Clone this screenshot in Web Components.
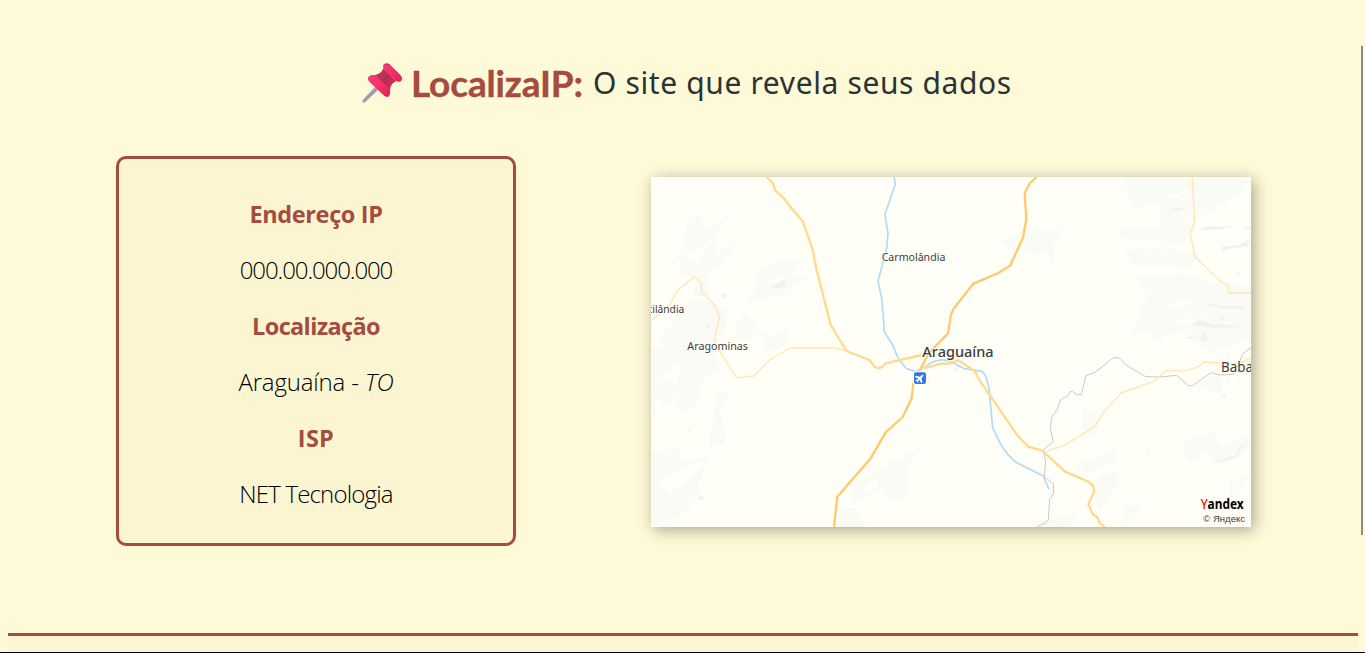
<!DOCTYPE html>
<html lang="pt-BR">
<head>
<meta charset="utf-8">
<title>LocalizaIP</title>
<style>
html,body{margin:0;height:100%;overflow:hidden;background:#fefad8}
</style>
</head>
<body>
<localiza-app></localiza-app>
<script>
const define = (name, html) => customElements.define(name, class extends HTMLElement {
  constructor(){ super(); this.attachShadow({mode:'open'}).innerHTML = html; }
});

define('push-pin', `<style>:host{display:block;width:40px;height:40px}svg{display:block}</style>
<svg width="40" height="40" viewBox="36 38 120 120">
<defs>
<linearGradient id="n" x1="0" y1="0" x2="1" y2="1"><stop offset=".3" stop-color="#bdb6c4"/><stop offset=".7" stop-color="#8c8296"/></linearGradient>
<linearGradient id="b" x1="0" y1="0" x2="1" y2="1"><stop offset="0" stop-color="#c9405f"/><stop offset=".5" stop-color="#b52d55"/><stop offset="1" stop-color="#e0305e"/></linearGradient>
<linearGradient id="c" x1="0" y1="0" x2="1" y2="1"><stop offset="0" stop-color="#f0407a"/><stop offset=".5" stop-color="#fa2e63"/><stop offset="1" stop-color="#d3245f"/></linearGradient>
</defs>
<path d="M75 109 L84 118 L45 156 Q40 159 37 154 Q36 151 40 147Z" fill="url(#n)"/>
<path d="M100 54 L139 93 Q126 97 121 112 L119 126 L66 76 L78 73 Q94 70 100 54Z" fill="url(#b)"/>
<path d="M57 78 Q68 70 80 78 L116 114 Q124 126 118 136 Q112 144 101 135 L58 94 Q50 86 57 78Z" fill="url(#c)"/>
<path d="M101 42 Q109 35 119 42 L151 74 Q160 84 153 92 Q146 98 136 90 L104 60 Q96 50 101 42Z" fill="url(#c)"/>
<path d="M105 43 Q110 38 118 44 L148 74" fill="none" stroke="#cf2d68" stroke-width="3" opacity=".6"/>
</svg>`);

define('site-header', `<style>
:host{display:flex;justify-content:flex-start;align-items:center;height:46px;padding:60px 0 50px 362px}
push-pin{margin:-1px 9px 0 0}
h1{margin:0;font:700 37px/46px Lato,sans-serif;color:#a64b40;white-space:nowrap;width:182px}
h1 span{letter-spacing:-.15px;-webkit-text-stroke:.4px #a64b40}
p{margin:0;font:400 30px/46px "Noto Sans",sans-serif;color:#2c3333;white-space:nowrap;letter-spacing:.62px}
</style><push-pin></push-pin><h1><span>LocalizaIP:</span></h1><p>O site que revela seus dados</p>`);

define('ip-card', `<style>
:host{display:block;box-sizing:border-box;width:400px;height:390px;border:3px solid #a64b40;border-radius:10px;background:#fbf6d1;padding-top:27px}
dl{margin:0;text-align:center;font:300 24px/56px "Open Sans","Noto Sans",sans-serif}
</style><dl><slot></slot></dl>`);

define('ip-field', `<style>
:host{display:block}
dt{font-weight:700;color:#a64b40;font-size:23.5px;letter-spacing:var(--ls-label,-.3px)}
dd{margin:0;color:#000;letter-spacing:var(--ls-value,-.4px)}
</style><dt><slot name="label"></slot></dt><dd><slot></slot></dd>`);

define('city-map', `<style>
:host{display:block;width:600px;height:350px;background:#fffff7;box-shadow:3px 3px 15px rgba(0,0,0,.35)}
svg{display:block;overflow:hidden}
text{font-family:"Noto Sans","Open Sans",sans-serif;fill:#3c3c3e}
.halo{stroke:#fffff7;stroke-width:5;paint-order:stroke}
</style>
<svg width="600" height="350" viewBox="33 36 1800 1050">
<g fill="#fbfbf5">
<path d="M145 154H190V180L205 190L265 154L220 225L232 265L285 235L250 300L200 320L210 400L160 390L170 340L115 325L135 280L90 302L135 250V200Z"/>
<path d="M310 420L350 370L345 330L430 280L490 282L450 340L515 335L455 365V392L380 395Z"/>
<path d="M120 420L200 400L260 440L258 500L200 580L160 620L140 560L95 610L60 520L110 460Z"/>
<path d="M280 480L320 445L360 500L300 530ZM355 495L390 515L450 482L430 545L380 560Z"/>
<path d="M33 545L130 560L215 550L240 610L190 640L170 720L130 740L100 700L33 760ZM230 690L272 665L240 740L260 820L205 850L220 750Z"/>
<path d="M33 860L110 845L130 890L220 870L170 950L180 1000L110 1060L33 1086Z"/>
<path d="M640 960L740 900L850 845L800 900L805 990L740 1010L730 970L680 1000L640 1020ZM600 1030L650 1025L680 1086H590Z"/>
<path d="M1080 230L1160 193L1265 197L1245 235V295L1230 295L1225 260L1180 270L1110 255Z"/>
<path d="M1453 36H1825L1810 75L1700 150L1650 210L1620 240L1560 225L1438 220L1440 193H1560L1558 120L1475 128Z"/>
<path d="M1455 255L1590 245L1680 270L1640 310L1560 300L1480 305ZM1490 335L1620 325L1700 350L1833 365V520L1710 560L1620 500L1560 520L1540 540L1530 500L1470 508L1520 400Z"/>
<path d="M1327 724L1375 758L1365 820L1325 790ZM1305 905L1430 845L1420 890L1340 925ZM1370 940L1430 915L1440 950L1400 1000L1375 1050Z"/>
<path d="M1620 840L1720 795L1740 845L1820 805L1833 850L1740 900L1700 860L1650 890ZM1455 1030L1505 1010L1490 1060L1450 1080ZM1190 1070L1310 1045L1290 1086H1190ZM1665 660L1740 620L1750 690L1720 680ZM1770 950L1830 930L1800 990L1770 1000Z"/>
</g>
<g fill="#fffff7">
<path d="M140 270L220 220L170 290ZM360 370L410 330L440 340ZM60 630L130 590L110 660ZM40 700L90 720L50 740ZM60 950L140 900L200 890L90 990ZM660 980L720 930L710 970ZM1570 90L1660 70L1610 100ZM1560 270L1690 240L1640 260ZM1560 420L1680 400L1630 430ZM1650 170L1760 130L1700 190ZM1580 470L1690 460L1640 480Z"/>
</g>
<g fill="#f1f1ee">
<path d="M1672 192L1700 185L1790 183L1740 193L1690 196ZM1745 245L1795 240L1830 222L1822 245L1780 248L1750 258ZM1790 330L1803 315L1795 335ZM1693 425L1725 412L1735 422L1800 422L1820 430L1740 432L1725 423ZM1655 480L1680 466L1720 478L1795 482L1770 489L1720 488ZM1675 525L1695 500L1703 528ZM1735 460L1755 455L1748 465ZM1633 518L1660 512L1650 523ZM1585 128L1640 129L1610 136ZM1597 79L1627 80L1610 84ZM1803 187L1833 184V196Z"/>
<path d="M1720 895L1760 878L1790 870L1800 840L1833 833L1805 845L1795 875L1750 888ZM1512 862L1525 855V830L1528 860ZM1745 690L1760 690L1752 700ZM390 368L438 340L436 365L412 372ZM193 485L210 475L207 488ZM235 392L258 385L255 400ZM133 795L152 798L148 803ZM170 948L197 930L175 940L190 920ZM180 990L195 1000L175 1008ZM215 828H255L248 832ZM862 643L870 640L868 648ZM1805 806L1810 810L1805 812Z"/>
</g>
<path d="M938 608L960 600L958 615L945 622Z" fill="#f6f4ee"/>
<g fill="none" stroke-linejoin="round">
<path stroke="#b2dcf5" stroke-width="5.2" d="M762 36L766 58L735 148L744 205L740 250L714 348L726 405L733 500L758 540L775 580L798 610L828 620L855 605L880 590L905 584L930 588L970 610L1028 620L1038 635L1047 670L1058 788L1083 840L1103 868L1128 892L1210 933L1227 973"/>
<path stroke="#c9c9c9" stroke-width="3" d="M1833 548L1815 560L1805 572L1800 592L1780 628L1740 630L1713 623L1658 662H1645L1610 631L1560 636L1517 635L1458 600L1440 580L1422 577L1365 622L1337 633L1324 689H1310L1298 680H1290L1282 694L1262 704L1252 733L1235 758L1231 790L1240 830L1210 855L1217 890L1213 935L1241 957L1240 987L1229 1002L1225 1065L1218 1073L1192 1085"/>
<path stroke="#ffe7b4" stroke-width="4" d="M33 468L65 440L90 418L112 377L162 336L184 353L186 384L220 415L239 455L222 530L240 560L290 638L342 633L392 582L452 549H587L620 558M1659 36L1657 50L1664 165L1651 208L1665 275L1743 350L1765 362V384H1833M1210 862L1275 840L1365 785L1388 745L1443 684L1540 650L1577 618L1640 617L1680 603L1690 591L1740 594L1800 595L1833 578"/>
<path stroke="#ffda8c" stroke-width="7" d="M380 36L400 58L405 75L432 100L457 133L488 168L517 250L530 315L572 480L620 558L688 585L705 606L717 610L727 605L737 595L845 570M840 608H862L900 596H925L955 586L1003 617L1020 648L1135 815L1165 845L1207 857L1275 920L1345 950L1360 963L1363 980L1345 1018L1358 1048L1372 1057L1380 1075L1396 1088"/>
<path stroke="#ffc96c" stroke-width="7" d="M1190 36L1170 54L1154 84L1159 162L1149 218L1110 302L1075 324L1000 356L943 428L933 448L924 505L875 555L858 580L838 620L820 655L815 700L788 756L737 802L692 880L592 995L582 1086"/>
</g>
<rect x="819" y="619" width="42" height="41" rx="8" fill="#fffff7"/>
<rect x="822" y="622" width="36" height="35" rx="6" fill="#3478e5"/>
<g transform="translate(840 639.5) rotate(45)" fill="#fff"><path d="M0-15Q3-12 3-7V-3L14 4V8L3 5L2 10L6 13V15L0 13L-6 15V13L-2 10L-3 5L-14 8V4L-3-3V-7Q-3-12 0-15Z"/></g>
<g class="halo">
<text x="725" y="289" font-size="34" textLength="191" lengthAdjust="spacingAndGlyphs">Carmolândia</text>
<text x="22" y="445" font-size="34" textLength="111" lengthAdjust="spacingAndGlyphs">cilândia</text>
<text x="142" y="556" font-size="34" textLength="182" lengthAdjust="spacingAndGlyphs">Aragominas</text>
<text x="847" y="577" font-size="44" font-weight="500" textLength="214" lengthAdjust="spacingAndGlyphs">Araguaína</text>
<text x="1743" y="620" font-size="41" textLength="96" lengthAdjust="spacingAndGlyphs">Baba</text>
</g>
<text x="1682" y="1032" font-size="42" font-weight="700" style="fill:#000" textLength="129" lengthAdjust="spacingAndGlyphs"><tspan fill="#f00" font-weight="500">Y</tspan>andex</text>
<text x="1690" y="1070" font-size="27" style="font-family:'Liberation Sans',sans-serif" textLength="125" lengthAdjust="spacingAndGlyphs">© Яндекс</text>
</svg>`);

define('scroll-thumb', `<style>:host{display:block;position:absolute;right:2px;top:46px;width:2px;height:489px;background:#8b8b8b}</style>`);
define('page-footer', `<style>:host{display:block;box-sizing:border-box;height:19px;margin:0 7px 0 8px;border-top:3px solid #a64b40;background:#fbf6d1}</style>`);

define('localiza-app', `<style>
:host{display:flex;flex-direction:column;box-sizing:border-box;height:653px;border-bottom:1px solid #000;background:#fefad8;position:relative;overflow:hidden}
main{display:flex;align-items:flex-start;justify-content:flex-start;gap:135px;padding-left:116px;height:390px;flex:none}
city-map,ip-card{flex:none}
city-map{margin-top:21px}
.ip{--ls-label:-.37px;--ls-value:-1.1px}
.place{--ls-label:-.65px;--ls-value:-.15px}
.isp{--ls-label:.3px;--ls-value:-.82px}
page-footer{margin-top:auto}
</style>
<site-header></site-header>
<main>
<ip-card>
<ip-field class="ip"><span slot="label">Endereço IP</span>000.00.000.000</ip-field>
<ip-field class="place"><span slot="label">Localização</span>Araguaína - <i>TO</i></ip-field>
<ip-field class="isp"><span slot="label">ISP</span>NET Tecnologia</ip-field>
</ip-card>
<city-map></city-map>
</main>
<page-footer></page-footer>
<scroll-thumb></scroll-thumb>`);
</script>
</body>
</html>
